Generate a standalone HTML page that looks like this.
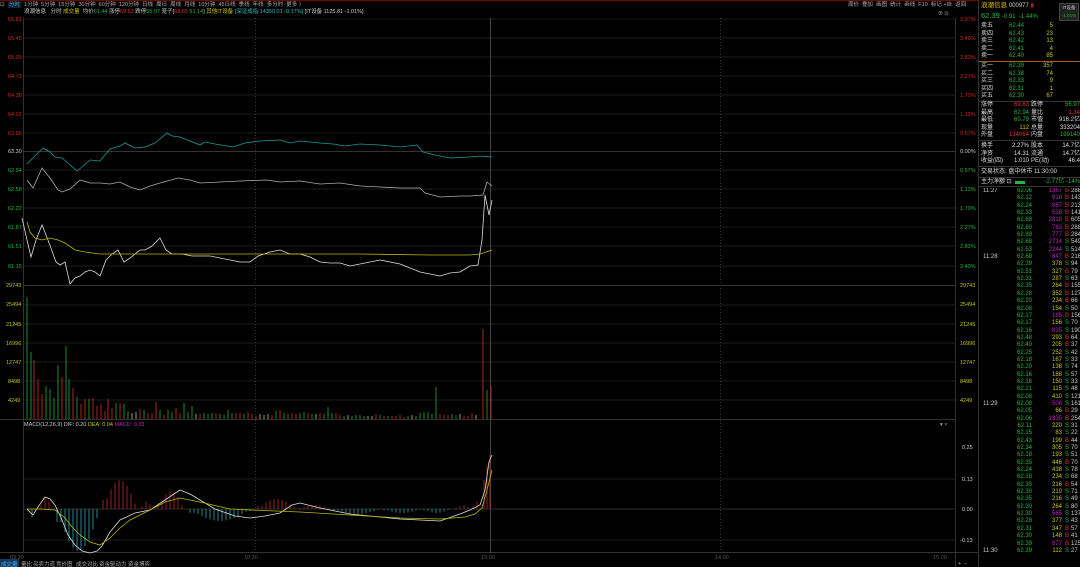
<!DOCTYPE html>
<html><head><meta charset="utf-8">
<style>
*{margin:0;padding:0;box-sizing:border-box}
body{width:1080px;height:567px;background:#000;overflow:hidden;position:relative;font-family:"Liberation Sans","Noto Sans CJK SC",sans-serif;color:#ccc;font-size:6px}
.a{position:absolute;white-space:nowrap;line-height:1}
.g{color:#1fb83a}.r{color:#e03030}.y{color:#c8c800}.m{color:#c020c0}.w{color:#ddd}.c{color:#20c0c0}
#rp{position:absolute;left:978px;top:0;width:102px;height:567px;border-left:1px solid #333}
.row{position:absolute;left:0;width:102px;height:7px;line-height:7px;font-size:6px}
.row span{position:absolute}
</style></head><body>
<div class="a" style="left:0;top:0;width:978px;height:1px;background:#600"></div>
<div class="a" style="left:0;top:1px;font-size:5.5px;color:#aaa;line-height:8px">
<span style="display:inline-block;width:8px">⊡</span><span style="background:#123;color:#3ad;padding:0 1px">分时</span>&nbsp; 1分钟&nbsp; 5分钟&nbsp; 15分钟&nbsp; 30分钟&nbsp; 60分钟&nbsp; 120分钟&nbsp; 日线&nbsp; 周日&nbsp; 周线&nbsp; 月线&nbsp; 10分钟&nbsp; 45日线&nbsp; 季线&nbsp; 年线&nbsp; 多分时&nbsp; 更多 〉</div>
<div class="a" style="left:848px;top:1px;font-size:5.5px;color:#aaa;line-height:8px">周价 &nbsp;叠加 &nbsp;画图 &nbsp;统计 &nbsp;画线 &nbsp;F10 &nbsp;标记 +自 &nbsp;返回</div>
<div class="a" style="left:24px;top:10px;font-size:5.5px;color:#ccc">浪潮信息 &nbsp; 分时 <span class="y">成交量</span> &nbsp;均价<span class="g">61.44</span> 涨停<span class="r">69.63</span> 跌停<span class="g">56.97</span> 笼子[<span class="r">63.65</span> <span class="g">61.14</span>] <span class="y">其他IT设备</span> <span class="c">[深证成指 14350.01 -0.17%]</span> [IT设备 1125.81 -1.01%]</div>
<div class="a" style="left:938px;top:12px;font-size:5px;color:#aaa">⊕ ⊡</div>

<svg class="a" style="left:0;top:0" width="978" height="567">
<g stroke="#1c1c1c" stroke-width="1">
<line x1="23" y1="19" x2="955" y2="19"/><line x1="23" y1="38" x2="955" y2="38"/><line x1="23" y1="57" x2="955" y2="57"/><line x1="23" y1="76" x2="955" y2="76"/><line x1="23" y1="95" x2="955" y2="95"/><line x1="23" y1="114" x2="955" y2="114"/><line x1="23" y1="133" x2="955" y2="133"/><line x1="23" y1="151.5" x2="955" y2="151.5" stroke="#333"/><line x1="23" y1="170" x2="955" y2="170"/><line x1="23" y1="189" x2="955" y2="189"/><line x1="23" y1="208" x2="955" y2="208"/><line x1="23" y1="227" x2="955" y2="227"/><line x1="23" y1="246" x2="955" y2="246"/><line x1="23" y1="266" x2="955" y2="266"/>
<line x1="23" y1="285.5" x2="955" y2="285.5" stroke="#333"/><line x1="23" y1="305" x2="955" y2="305"/><line x1="23" y1="324" x2="955" y2="324"/><line x1="23" y1="343" x2="955" y2="343"/><line x1="23" y1="362" x2="955" y2="362"/><line x1="23" y1="381" x2="955" y2="381"/><line x1="23" y1="400" x2="955" y2="400"/>
<line x1="0" y1="419.5" x2="955" y2="419.5" stroke="#333"/>
<line x1="23" y1="479" x2="955" y2="479"/><line x1="23" y1="509" x2="955" y2="509" stroke="#2a2a2a"/><line x1="23" y1="540" x2="955" y2="540"/>
<line x1="0" y1="552.5" x2="978" y2="552.5" stroke="#333"/>
<line x1="23.5" y1="18" x2="23.5" y2="553" stroke="#333"/>
<line x1="955.5" y1="18" x2="955.5" y2="567" stroke="#333"/>
<line x1="255.5" y1="18" x2="255.5" y2="553" stroke-dasharray="1 2" stroke="#333"/>
<line x1="720.5" y1="18" x2="720.5" y2="553" stroke-dasharray="1 2" stroke="#333"/>
<line x1="490.5" y1="18" x2="490.5" y2="553" stroke="#444"/>
</g>
<g font-size="5.5" font-family="Liberation Sans" text-anchor="start">
<text x="8" y="21" fill="#d02828">65.81</text><text x="8" y="40" fill="#d02828">65.45</text><text x="8" y="59" fill="#d02828">65.09</text><text x="8" y="78" fill="#d02828">64.73</text><text x="8" y="97" fill="#d02828">64.38</text><text x="8" y="116" fill="#d02828">64.02</text><text x="8" y="135" fill="#d02828">63.66</text><text x="8" y="153" fill="#ccc">63.30</text><text x="8" y="172" fill="#1fb83a">62.94</text><text x="8" y="191" fill="#1fb83a">62.58</text><text x="8" y="210" fill="#1fb83a">62.22</text><text x="8" y="229" fill="#1fb83a">61.87</text><text x="8" y="248" fill="#1fb83a">61.51</text><text x="8" y="268" fill="#1fb83a">61.15</text>
<text x="6" y="287" fill="#c8c800">29743</text><text x="6" y="306" fill="#c8c800">25494</text><text x="6" y="326" fill="#c8c800">21245</text><text x="6" y="345" fill="#c8c800">16996</text><text x="6" y="364" fill="#c8c800">12747</text><text x="8" y="383" fill="#c8c800">8498</text><text x="8" y="402" fill="#c8c800">4249</text>
<text x="960" y="21" fill="#d02828">3.97%</text><text x="960" y="40" fill="#d02828">3.40%</text><text x="960" y="59" fill="#d02828">2.83%</text><text x="960" y="78" fill="#d02828">2.27%</text><text x="960" y="97" fill="#d02828">1.70%</text><text x="960" y="116" fill="#d02828">1.13%</text><text x="960" y="135" fill="#d02828">0.57%</text><text x="960" y="153" fill="#ccc">0.00%</text><text x="960" y="172" fill="#1fb83a">0.57%</text><text x="960" y="191" fill="#1fb83a">1.13%</text><text x="960" y="210" fill="#1fb83a">1.70%</text><text x="960" y="229" fill="#1fb83a">2.27%</text><text x="960" y="248" fill="#1fb83a">2.83%</text><text x="960" y="268" fill="#1fb83a">3.40%</text>
<text x="960" y="287" fill="#c8c800">29743</text><text x="960" y="306" fill="#c8c800">25494</text><text x="960" y="326" fill="#c8c800">21245</text><text x="960" y="345" fill="#c8c800">16996</text><text x="960" y="364" fill="#c8c800">12747</text><text x="960" y="383" fill="#c8c800">8498</text><text x="960" y="402" fill="#c8c800">4249</text>
<text x="962" y="449" fill="#ccc">0.25</text><text x="962" y="481" fill="#ccc">0.13</text><text x="962" y="511" fill="#ccc">0.00</text><text x="960" y="542" fill="#ccc">-0.13</text>
<text x="24" y="426" fill="#ccc">MACD(12,26,9) DIF: 0.20 <tspan fill="#c8c800">DEA: 0.04</tspan> <tspan fill="#c020c0">MACD: 0.33</tspan></text>
<text x="940" y="426" fill="#aaa">▾ ×</text>
<text x="10" y="559" fill="#555">09:30</text><text x="244" y="559" fill="#555">10:30</text><text x="481" y="559" fill="#555">13:00</text><text x="715" y="559" fill="#555">14:00</text><text x="933" y="559" fill="#555">15:00</text>
<text x="958" y="565" fill="#aaa">+ &nbsp;−</text>
</g>
<g font-size="5.5" fill="#aaa">
<rect x="0" y="559" width="19" height="8" fill="#123a5a"/>
<text x="1" y="566" fill="#4af">成交量</text><text x="21" y="566">量比</text><text x="33" y="566">买卖力道</text><text x="56" y="566">竞价图</text><text x="76" y="566">成交对比</text><text x="99" y="566">资金驱动力</text><text x="128" y="566">资金博弈</text>
</g>
<g id="vol"></g>
<g id="macd"></g>
<g fill="none" stroke-width="0.8">
<polyline stroke="#1a9a9a" points="27,164 35,156 43,148 50,152 55,157 62,158 68,163 77,171 82,167 90,160 100,161 110,149 120,146 125,143 135,148 145,147 155,143 167,133 172,136 180,137 190,141 200,145 205,142 215,144 233,147 245,143 260,141 280,140 290,143 300,141 320,143 333,144 345,146 360,144 380,145 400,147 417,145 423,152 435,155 450,158 470,157 480,156 492,157"/>
<polyline stroke="#aaa" points="27,180 33,188 42,168 50,178 58,190 62,192 70,189 80,180 90,183 100,183 110,184 120,182 130,187 140,190 150,186 160,183 178,178 190,180 200,183 220,182 240,181 267,180 280,182 300,181 320,184 340,183 360,186 380,187 400,188 420,188 425,193 440,197 460,196 470,196 483,195 487,182 492,186"/>
<polyline stroke="#ddd" points="22,218 27,240 31,257 36,240 42,225 48,240 56,262 60,265 65,262 70,284 75,278 80,276 85,272 90,270 95,272 100,276 106,260 112,254 118,250 124,262 130,258 140,250 145,250 152,246 160,238 166,250 172,254 182,254 192,256 210,256 220,258 240,262 250,262 258,256 270,252 280,250 290,254 300,254 310,257 320,262 330,263 340,263 350,266 365,263 380,260 400,264 420,272 430,274 440,276 450,273 460,272 470,266 478,265 482,240 485,195 487,205 489,215 492,200"/>
<polyline stroke="#b8b800" points="27,222 30,232 35,238 42,240 50,238 58,240 65,243 75,250 85,252 100,254 150,254 200,254 300,254 360,254 430,255 470,255 480,254 486,252 492,250"/>
</g>
</svg>

<div id="rp">
<div class="a" style="left:2px;top:3px;font-size:6.5px;color:#e8c000">浪潮信息 <span style="color:#ccc;font-size:6px">000977</span> <span style="background:#600;color:#f44;font-size:4.5px">R</span></div>
<div class="a g" style="left:2px;top:12px;font-size:7.5px">62.39 <span style="font-size:6px">-0.91 &nbsp;-1.44%</span></div>
<div class="a" style="left:80px;top:3px;width:20px;height:18px;background:#222;border:1px solid #444;font-size:4.5px;text-align:center;padding-top:2px;color:#ccc">IT设备<br><span class="g" style="line-height:9px">-1.01%</span></div>
<div class="row w" style="top:23px"><span style="left:2px">卖五</span><span class="g" style="left:30px">62.44</span><span class="y" style="right:28px">5</span></div>
<div class="row w" style="top:30.5px"><span style="left:2px">卖四</span><span class="g" style="left:30px">62.43</span><span class="y" style="right:28px">23</span></div>
<div class="row w" style="top:38px"><span style="left:2px">卖三</span><span class="g" style="left:30px">62.42</span><span class="y" style="right:28px">13</span></div>
<div class="row w" style="top:45.5px"><span style="left:2px">卖二</span><span class="g" style="left:30px">62.41</span><span class="y" style="right:28px">4</span></div>
<div class="row w" style="top:53px"><span style="left:2px">卖一</span><span class="g" style="left:30px">62.40</span><span class="y" style="right:28px">85</span></div>
<div class="a" style="left:0;top:61px;width:102px;height:1px;background:#a06010"></div>
<div class="row w" style="top:63px"><span style="left:2px">买一</span><span class="g" style="left:30px">62.39</span><span class="y" style="right:28px">357</span></div>
<div class="row w" style="top:70.5px"><span style="left:2px">买二</span><span class="g" style="left:30px">62.38</span><span class="y" style="right:28px">74</span></div>
<div class="row w" style="top:78px"><span style="left:2px">买三</span><span class="g" style="left:30px">62.33</span><span class="y" style="right:28px">9</span></div>
<div class="row w" style="top:85.5px"><span style="left:2px">买四</span><span class="g" style="left:30px">62.31</span><span class="y" style="right:28px">1</span></div>
<div class="row w" style="top:93px"><span style="left:2px">买五</span><span class="g" style="left:30px">62.30</span><span class="y" style="right:28px">67</span></div>
<div class="a" style="left:0;top:101px;width:102px;height:1px;background:#333"></div>
<div class="row w" style="top:102px"><span style="left:2px">涨停</span><span class="r" style="right:52px">69.63</span><span style="left:52px">跌停</span><span class="g" style="right:1px">56.97</span></div>
<div class="row w" style="top:109.5px"><span style="left:2px">最高</span><span class="g" style="right:52px">62.94</span><span style="left:52px">量比</span><span class="r" style="right:1px">1.34</span></div>
<div class="row w" style="top:117px"><span style="left:2px">最低</span><span class="g" style="right:52px">60.79</span><span style="left:52px">市值</span><span style="right:1px">916.2亿</span></div>
<div class="row w" style="top:124.5px"><span style="left:2px">现量</span><span class="y" style="right:52px">112</span><span style="left:52px">总量</span><span style="right:1px">333204</span></div>
<div class="row w" style="top:132px"><span style="left:2px">外盘</span><span class="r" style="right:52px">134064</span><span style="left:52px">内盘</span><span class="g" style="right:1px">199140</span></div>
<div class="a" style="left:0;top:140px;width:102px;height:1px;background:#333"></div>
<div class="row w" style="top:143px"><span style="left:2px">换手</span><span style="right:52px">2.27%</span><span style="left:52px">股本</span><span style="right:1px">14.7亿</span></div>
<div class="row w" style="top:150.5px"><span style="left:2px">净资</span><span style="right:52px">14.31</span><span style="left:52px">流通</span><span style="right:1px">14.7亿</span></div>
<div class="row w" style="top:158px"><span style="left:2px">收益(四)</span><span style="right:52px">1.010</span><span style="left:52px">PE(动)</span><span style="right:1px">46.4</span></div>
<div class="a" style="left:0;top:166px;width:102px;height:1px;background:#333"></div>
<div class="row w" style="top:169px"><span style="left:2px">交易状态: 盘中休市 11:30:00</span></div>
<div class="a" style="left:0;top:177px;width:102px;height:1px;background:#333"></div>
<div class="row w" style="top:178.5px"><span style="left:2px">主力净额 ⊡</span><span style="left:36px;top:2.5px;width:10px;height:2.5px;background:#1fb83a"></span><span class="g" style="right:1px">-2.77亿 -14%</span></div>
<div class="a" style="left:0;top:186px;width:102px;height:1px;background:#333"></div>
</div>
<div id="tk" style="position:absolute;left:978px;top:188px;width:102px;font-size:6px;line-height:7.35px;color:#ccc;overflow:hidden">
<style>#tk div{height:7.35px;position:relative}#tk span{position:absolute}#tk .t{left:5px}#tk .p{right:48px;color:#1fb83a}#tk .v{right:18px;color:#c8c800}#tk .v.m{color:#c020c0}#tk .b{left:87px;color:#e03030}#tk .s{left:87px;color:#1fb83a}#tk .n{left:93px;color:#ccc}</style>
<div><span class="t">11:27</span><span class="p">62.06</span><span class="v m">1367</span><span class="b">B</span><span class="n">288</span></div>
<div><span class="p">62.12</span><span class="v m">918</span><span class="b">B</span><span class="n">143</span></div>
<div><span class="p">62.24</span><span class="v m">867</span><span class="b">B</span><span class="n">213</span></div>
<div><span class="p">62.33</span><span class="v m">538</span><span class="b">B</span><span class="n">141</span></div>
<div><span class="p">62.68</span><span class="v m">2818</span><span class="b">B</span><span class="n">605</span></div>
<div><span class="p">62.80</span><span class="v m">763</span><span class="b">B</span><span class="n">288</span></div>
<div><span class="p">62.89</span><span class="v m">777</span><span class="b">B</span><span class="n">284</span></div>
<div><span class="p">62.68</span><span class="v m">2714</span><span class="s">S</span><span class="n">549</span></div>
<div><span class="p">62.53</span><span class="v m">2244</span><span class="s">S</span><span class="n">514</span></div>
<div><span class="t">11:28</span><span class="p">62.68</span><span class="v m">847</span><span class="b">B</span><span class="n">216</span></div>
<div><span class="p">62.39</span><span class="v">378</span><span class="s">S</span><span class="n">94</span></div>
<div><span class="p">62.51</span><span class="v">327</span><span class="b">B</span><span class="n">79</span></div>
<div><span class="p">62.31</span><span class="v">287</span><span class="s">S</span><span class="n">63</span></div>
<div><span class="p">62.35</span><span class="v">264</span><span class="b">B</span><span class="n">155</span></div>
<div><span class="p">62.28</span><span class="v">352</span><span class="b">B</span><span class="n">127</span></div>
<div><span class="p">62.20</span><span class="v">234</span><span class="b">B</span><span class="n">66</span></div>
<div><span class="p">62.08</span><span class="v">154</span><span class="s">S</span><span class="n">50</span></div>
<div><span class="p">62.17</span><span class="v m">185</span><span class="b">B</span><span class="n">156</span></div>
<div><span class="p">62.17</span><span class="v">156</span><span class="s">S</span><span class="n">70</span></div>
<div><span class="p">62.16</span><span class="v m">835</span><span class="s">S</span><span class="n">190</span></div>
<div><span class="p">62.48</span><span class="v">293</span><span class="b">B</span><span class="n">64</span></div>
<div><span class="p">62.40</span><span class="v">205</span><span class="b">B</span><span class="n">37</span></div>
<div><span class="p">62.25</span><span class="v">252</span><span class="s">S</span><span class="n">42</span></div>
<div><span class="p">62.18</span><span class="v">167</span><span class="s">S</span><span class="n">33</span></div>
<div><span class="p">62.20</span><span class="v">138</span><span class="s">S</span><span class="n">74</span></div>
<div><span class="p">62.16</span><span class="v">188</span><span class="s">S</span><span class="n">57</span></div>
<div><span class="p">62.16</span><span class="v">150</span><span class="s">S</span><span class="n">33</span></div>
<div><span class="p">62.21</span><span class="v">115</span><span class="s">S</span><span class="n">48</span></div>
<div><span class="p">62.08</span><span class="v">410</span><span class="s">S</span><span class="n">121</span></div>
<div><span class="t">11:29</span><span class="p">62.08</span><span class="v m">508</span><span class="s">S</span><span class="n">161</span></div>
<div><span class="p">62.05</span><span class="v">66</span><span class="b">B</span><span class="n">29</span></div>
<div><span class="p">62.06</span><span class="v m">1335</span><span class="b">B</span><span class="n">254</span></div>
<div><span class="p">62.11</span><span class="v">220</span><span class="s">S</span><span class="n">31</span></div>
<div><span class="p">62.15</span><span class="v">83</span><span class="s">S</span><span class="n">22</span></div>
<div><span class="p">62.43</span><span class="v">199</span><span class="b">B</span><span class="n">44</span></div>
<div><span class="p">62.34</span><span class="v">305</span><span class="s">S</span><span class="n">70</span></div>
<div><span class="p">62.18</span><span class="v">193</span><span class="s">S</span><span class="n">51</span></div>
<div><span class="p">62.35</span><span class="v">446</span><span class="b">B</span><span class="n">70</span></div>
<div><span class="p">62.24</span><span class="v">438</span><span class="s">S</span><span class="n">78</span></div>
<div><span class="p">62.28</span><span class="v">234</span><span class="s">S</span><span class="n">68</span></div>
<div><span class="p">62.35</span><span class="v">216</span><span class="b">B</span><span class="n">54</span></div>
<div><span class="p">62.30</span><span class="v">210</span><span class="s">S</span><span class="n">71</span></div>
<div><span class="p">62.35</span><span class="v">216</span><span class="s">S</span><span class="n">49</span></div>
<div><span class="p">62.30</span><span class="v">264</span><span class="s">S</span><span class="n">80</span></div>
<div><span class="p">62.30</span><span class="v m">565</span><span class="s">S</span><span class="n">137</span></div>
<div><span class="p">62.28</span><span class="v">377</span><span class="s">S</span><span class="n">43</span></div>
<div><span class="p">62.31</span><span class="v">347</span><span class="b">B</span><span class="n">57</span></div>
<div><span class="p">62.30</span><span class="v">148</span><span class="b">B</span><span class="n">41</span></div>
<div><span class="p">62.39</span><span class="v m">877</span><span class="b">B</span><span class="n">125</span></div>
<div><span class="t">11:30</span><span class="p">62.39</span><span class="v">112</span><span class="s">S</span><span class="n">27</span></div>
</div>
<script>
(function(){
var NS="http://www.w3.org/2000/svg";
var vol=document.getElementById("vol");
function ln(g,x,y1,y2,c,w){var l=document.createElementNS(NS,"line");l.setAttribute("x1",x);l.setAttribute("x2",x);l.setAttribute("y1",y1);l.setAttribute("y2",y2);l.setAttribute("stroke",c);l.setAttribute("stroke-width",w||1);g.appendChild(l);}
var R="#c02828",G="#1a9a30",W="#aaa";
var fixed=[[27,297,G],[31,352,G],[34,360,R],[38,379,R],[42,394,R],[46,386,G],[50,389,G],[54,398,G],[58,365,G],[62,377,R],[66,346,G],[69,379,G],[73,388,R],[77,397,G],[81,404,R],[85,399,R],[89,399,G],[93,398,R],[97,406,R],[101,404,R],[105,411,R],[108,399,R],[112,408,R],[116,403,G],[120,403,R],[124,404,G],[128,411,G],[132,413,W],[136,412,W],[140,409,R],[144,410,G],[148,413,R],[152,413,R],[156,402,R],[160,410,G],[164,415,R],[168,410,G],[172,412,G],[176,408,R],[180,413,R],[184,403,G],[188,412,G],[192,406,G],[196,414,W],[200,414,R],[204,413,G],[208,414,G],[212,413,G],[216,413,R],[220,414,G],[224,415,G],[228,410,G],[232,413,G],[236,413,R],[240,413,R],[244,414,G],[248,412,R],[252,414,R],[256,416,R],[260,414,W],[264,415,W],[268,414,W],[272,415,R],[276,411,G],[280,410,R],[284,413,G],[288,414,G],[292,413,R],[296,414,R],[300,413,G],[304,412,G],[308,413,R],[312,414,G],[316,414,W],[320,413,R],[324,414,G],[328,407,G],[332,413,G],[336,413,R],[340,415,R],[344,416,G],[348,415,W],[352,416,G],[356,415,G],[360,415,G],[364,416,G],[368,416,W],[372,416,W],[376,414,R],[380,415,G],[384,416,R],[388,416,G],[392,416,R],[396,416,R],[400,415,R],[404,417,R],[408,416,G],[412,415,W],[416,416,G],[420,413,G],[424,412,G],[428,412,G],[432,414,G],[436,387,G],[440,414,R],[444,415,R],[448,415,R],[452,414,G],[456,415,G],[460,414,W],[464,416,R],[468,416,R],[472,413,R],[476,415,W],[483,329,R],[487,390,G],[491,386,R]];
fixed.forEach(function(b){ln(vol,b[0],b[1],419,b[2],0.9);});
var m=document.getElementById("macd");
var C="#30a8b0";
function hb(x0,x1,peak,c,dir){for(var x=x0;x<=x1;x+=4){var t=(x-x0)/(x1-x0+0.001);var h=peak*Math.sin(Math.PI*Math.min(0.95,Math.max(0.1,t)));ln(m,x,509,509+dir*h,c,0.8);}}
hb(28,36,8,C,1);hb(41,51,12,R,-1);hb(57,100,42,C,1);hb(103,137,29,R,-1);hb(142,152,8,R,-1);hb(158,184,18,R,-1);hb(190,250,12,C,1);hb(258,296,10,R,-1);hb(300,330,4,R,-1);hb(334,380,5,C,1);hb(384,420,4,C,1);hb(424,450,4,C,1);hb(456,470,4,R,-1);hb(473,480,8,R,-1);
ln(m,484,509,480,R,0.8);ln(m,487,509,466,R,0.8);ln(m,490,509,455,R,0.8);
function pl(pts,c){var p=document.createElementNS(NS,"polyline");p.setAttribute("points",pts);p.setAttribute("fill","none");p.setAttribute("stroke",c);p.setAttribute("stroke-width","0.8");m.appendChild(p);}
pl("27,509 33,515 38,507 45,497 50,499 55,505 62,520 68,535 75,545 82,551 90,553 97,551 102,546 110,532 120,520 135,513 150,510 165,500 180,490 190,494 200,500 215,509 235,516 250,518 265,516 280,513 292,505 300,503 320,508 350,514 380,517 400,519 420,520 440,521 460,514 470,510 480,505 485,490 489,462 492,455","#ddd");
pl("27,509 40,509 55,510 65,518 72,527 80,535 90,542 100,545 110,538 120,528 130,520 150,510 165,502 180,498 200,502 230,509 250,510 300,512 350,515 400,518 440,519 465,517 475,514 482,508 487,490 492,470","#b8b800");
})();
</script>
</body></html>
